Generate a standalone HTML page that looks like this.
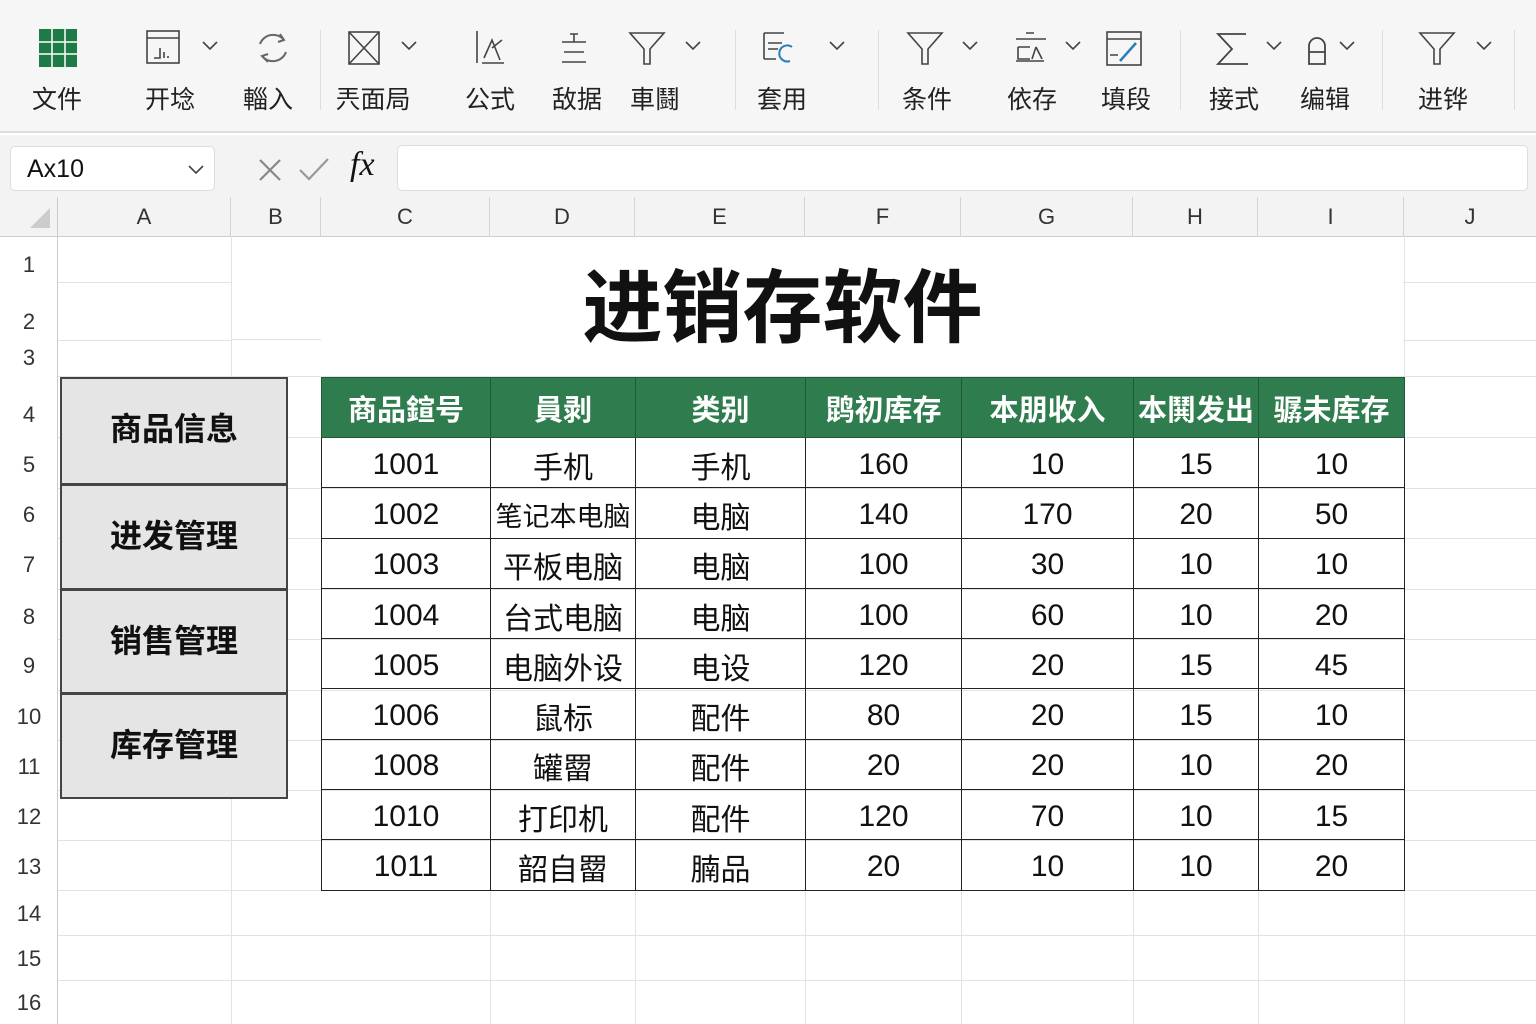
<!DOCTYPE html>
<html><head><meta charset="utf-8"><style>
*{margin:0;padding:0;box-sizing:border-box}
body{width:1536px;height:1024px;position:relative;overflow:hidden;background:#fff;font-family:"Liberation Sans","Noto Sans CJK SC",sans-serif;color:#111}
.a{position:absolute}
.lbl{position:absolute;top:80px;font-size:25px;transform:translateX(-50%);white-space:nowrap;color:#222}
.ic{position:absolute;top:28px}
.chev{position:absolute;top:40px}
.sep{position:absolute;width:1px;background:#ddd;top:30px;height:80px}
.ch{position:absolute;top:197px;height:39px;line-height:39px;text-align:center;font-size:22px;color:#333;border-right:1px solid #d4d4d4}
.rh{position:absolute;left:0;width:58px;text-align:center;font-size:22px;color:#333}
.vl{position:absolute;top:236px;bottom:0;width:1px;background:#e3e3e3}
.hl{position:absolute;left:58px;right:0;height:1px;background:#e3e3e3}
.btn{position:absolute;left:60px;width:228px;background:#e5e5e5;border:2px solid #444;border-bottom-width:1px;font-size:32px;font-weight:bold;text-align:center;color:#111}
table{position:absolute;left:321px;top:377px;border-collapse:collapse;table-layout:fixed}
td{border:1.5px solid #222;text-align:center;font-size:30px;height:50.3px;padding:4px 0 0}
tr.h td{background:#2f7d4e;color:#fff;font-size:29px;font-weight:bold;height:60px;border-color:#1f5a36;padding:0}
</style></head><body>
<div class="a" style="left:0;top:0;width:1536px;height:133px;background:#f6f6f6;border-bottom:2px solid #ddd"></div>
<div class="a" style="left:0;top:135px;width:1536px;height:101px;background:#f3f3f3"></div>

<svg class="ic" style="left:38px" width="40" height="40"><rect x="1" y="1" width="38" height="38" fill="#1e7b45"/><path d="M1 14H39M1 26H39M14 1V39M27 1V39" stroke="#fff" stroke-width="1.5"/></svg>
<svg class="ic" style="left:146px;top:30px" width="36" height="36" fill="none" stroke="#444" stroke-width="1.6"><rect x="1" y="1" width="32" height="32"/><path d="M1 8H33M8 28H14V18M18 28V22M22 28V26"/></svg>
<svg class="ic" style="left:256px;top:30px" width="34" height="36" fill="none" stroke="#666" stroke-width="2"><path d="M28 10A14 14 0 0 0 4 14M6 26A14 14 0 0 0 30 22M24 4L28 10L22 12M12 32L6 26L12 24"/></svg>
<svg class="ic" style="left:348px;top:31px" width="34" height="34" fill="none" stroke="#444" stroke-width="1.6"><rect x="1" y="1" width="30" height="32"/><path d="M1 1L31 33M31 1L1 33"/></svg>
<svg class="ic" style="left:474px;top:30px" width="32" height="36" fill="none" stroke="#444" stroke-width="1.6"><path d="M3 1V33M8 33H30M10 28L18 10L26 30M18 18L28 10"/></svg>
<svg class="ic" style="left:558px;top:32px" width="32" height="34" fill="none" stroke="#444" stroke-width="1.6"><path d="M12 2H20M16 2V10M4 10H28M6 20H26M4 30H28"/></svg>
<svg class="ic" style="left:628px;top:31px" width="38" height="36" fill="none" stroke="#444" stroke-width="1.6"><path d="M2 2H36L22 18V33H16V18Z"/></svg>
<svg class="ic" style="left:762px;top:31px" width="34" height="36" fill="none" stroke="#444" stroke-width="1.6"><path d="M2 2H22M2 2V28M2 28H14M6 12H20M6 18H16"/><path d="M30 16A8 8 0 1 0 28 30" stroke="#2a7fb8" stroke-width="2"/></svg>
<svg class="ic" style="left:906px;top:31px" width="38" height="36" fill="none" stroke="#444" stroke-width="1.6"><path d="M2 2H36L22 18V33H16V18Z"/></svg>
<svg class="ic" style="left:1012px;top:31px" width="40" height="34" fill="none" stroke="#444" stroke-width="1.6"><path d="M14 2H22M4 8H34M6 16H18M6 16V28H18M24 16L20 28M24 16L30 28M4 30H32"/></svg>
<svg class="ic" style="left:1106px;top:31px" width="38" height="36" fill="none" stroke="#444" stroke-width="1.6"><rect x="1" y="1" width="34" height="33"/><path d="M1 8H35M4 24H12"/><path d="M14 30L30 12" stroke="#2a7fb8" stroke-width="2.5"/></svg>
<svg class="ic" style="left:1214px;top:32px" width="36" height="34" fill="none" stroke="#444" stroke-width="1.8"><path d="M32 2H4L18 17L4 32H34"/></svg>
<svg class="ic" style="left:1305px;top:34px" width="24" height="32" fill="none" stroke="#444" stroke-width="1.8"><path d="M4 30V12A8 8 0 0 1 20 12V30Z M4 18H20"/></svg>
<svg class="ic" style="left:1418px;top:31px" width="38" height="36" fill="none" stroke="#444" stroke-width="1.6"><path d="M2 2H36L22 18V33H16V18Z"/></svg>
<svg class="chev" style="left:202px" width="16" height="12"><path d="M1 2L8 9L15 2" fill="none" stroke="#444" stroke-width="1.6"/></svg>
<svg class="chev" style="left:401px" width="16" height="12"><path d="M1 2L8 9L15 2" fill="none" stroke="#444" stroke-width="1.6"/></svg>
<svg class="chev" style="left:685px" width="16" height="12"><path d="M1 2L8 9L15 2" fill="none" stroke="#444" stroke-width="1.6"/></svg>
<svg class="chev" style="left:829px" width="16" height="12"><path d="M1 2L8 9L15 2" fill="none" stroke="#444" stroke-width="1.6"/></svg>
<svg class="chev" style="left:962px" width="16" height="12"><path d="M1 2L8 9L15 2" fill="none" stroke="#444" stroke-width="1.6"/></svg>
<svg class="chev" style="left:1065px" width="16" height="12"><path d="M1 2L8 9L15 2" fill="none" stroke="#444" stroke-width="1.6"/></svg>
<svg class="chev" style="left:1266px" width="16" height="12"><path d="M1 2L8 9L15 2" fill="none" stroke="#444" stroke-width="1.6"/></svg>
<svg class="chev" style="left:1339px" width="16" height="12"><path d="M1 2L8 9L15 2" fill="none" stroke="#444" stroke-width="1.6"/></svg>
<svg class="chev" style="left:1476px" width="16" height="12"><path d="M1 2L8 9L15 2" fill="none" stroke="#444" stroke-width="1.6"/></svg>
<div class="sep" style="left:320px"></div><div class="sep" style="left:735px"></div><div class="sep" style="left:878px"></div><div class="sep" style="left:1180px"></div><div class="sep" style="left:1382px"></div><div class="sep" style="left:1514px"></div>
<div class="lbl" style="left:57px">文件</div>
<div class="lbl" style="left:170px">开埝</div>
<div class="lbl" style="left:268px">輜入</div>
<div class="lbl" style="left:373px">兲面局</div>
<div class="lbl" style="left:490px">公式</div>
<div class="lbl" style="left:577px">敌据</div>
<div class="lbl" style="left:655px">車鬪</div>
<div class="lbl" style="left:782px">套用</div>
<div class="lbl" style="left:927px">条件</div>
<div class="lbl" style="left:1032px">依存</div>
<div class="lbl" style="left:1126px">填段</div>
<div class="lbl" style="left:1234px">接式</div>
<div class="lbl" style="left:1325px">编辑</div>
<div class="lbl" style="left:1443px">进铧</div>

<div class="a" style="left:10px;top:146px;width:205px;height:45px;background:#fff;border:1px solid #ddd;border-radius:5px;font-size:25px;line-height:44px;padding-left:16px">Ax10</div>
<svg class="a" style="left:188px;top:164px" width="16" height="12"><path d="M1 2L8 9L15 2" fill="none" stroke="#444" stroke-width="1.6"/></svg>
<svg class="a" style="left:258px;top:158px" width="24" height="24"><path d="M2 2L22 22M22 2L2 22" stroke="#888" stroke-width="2.2"/></svg>
<svg class="a" style="left:298px;top:156px" width="32" height="26"><path d="M2 14L11 23L30 3" fill="none" stroke="#999" stroke-width="2.2"/></svg>
<div class="a" style="left:350px;top:146px;font-family:'Liberation Serif',serif;font-style:italic;font-size:34px">fx</div>
<div class="a" style="left:397px;top:145px;width:1131px;height:46px;background:#fff;border:1px solid #ddd;border-radius:5px"></div>

<svg class="a" style="left:28px;top:206px" width="24" height="24"><path d="M22 2V22H2Z" fill="#ccc"/></svg>
<div class="a" style="left:0;top:236px;width:1536px;height:1px;background:#ccc"></div>
<div class="a" style="left:57px;top:197px;width:1px;height:827px;background:#ccc"></div>
<div class="ch" style="left:58px;width:173px">A</div>
<div class="ch" style="left:231px;width:90px">B</div>
<div class="ch" style="left:321px;width:169px">C</div>
<div class="ch" style="left:490px;width:145px">D</div>
<div class="ch" style="left:635px;width:170px">E</div>
<div class="ch" style="left:805px;width:156px">F</div>
<div class="ch" style="left:961px;width:172px">G</div>
<div class="ch" style="left:1133px;width:125px">H</div>
<div class="ch" style="left:1258px;width:146px">I</div>
<div class="ch" style="left:1404px;width:132px;border:none">J</div>

<div class="vl" style="left:231px"></div><div class="vl" style="left:490px"></div><div class="vl" style="left:635px"></div><div class="vl" style="left:805px"></div><div class="vl" style="left:961px"></div><div class="vl" style="left:1133px"></div><div class="vl" style="left:1258px"></div><div class="vl" style="left:1404px"></div>
<div class="hl" style="top:282px"></div><div class="hl" style="top:340px"></div><div class="hl" style="top:376px"></div><div class="hl" style="top:437px"></div><div class="hl" style="top:488px"></div><div class="hl" style="top:538px"></div><div class="hl" style="top:589px"></div><div class="hl" style="top:639px"></div><div class="hl" style="top:690px"></div><div class="hl" style="top:740px"></div><div class="hl" style="top:790px"></div><div class="hl" style="top:840px"></div><div class="hl" style="top:890px"></div><div class="hl" style="top:935px"></div><div class="hl" style="top:980px"></div>
<div class="a" style="left:232px;top:237px;width:1171px;height:139px;background:#fff"></div>
<div class="a" style="left:232px;top:237px;width:89px;height:103px;border-bottom:1px solid #e3e3e3"></div>

<div class="rh" style="top:252px">1</div><div class="rh" style="top:309px">2</div><div class="rh" style="top:345px">3</div><div class="rh" style="top:402px">4</div><div class="rh" style="top:452px">5</div><div class="rh" style="top:502px">6</div><div class="rh" style="top:552px">7</div><div class="rh" style="top:604px">8</div><div class="rh" style="top:653px">9</div><div class="rh" style="top:704px">10</div><div class="rh" style="top:754px">11</div><div class="rh" style="top:804px">12</div><div class="rh" style="top:854px">13</div><div class="rh" style="top:901px">14</div><div class="rh" style="top:946px">15</div><div class="rh" style="top:990px">16</div>

<div class="a" style="left:0;top:254px;width:1565px;text-align:center;font-size:80px;font-weight:bold;font-family:'Noto Sans CJK SC',sans-serif;line-height:96px">进销存软件</div>

<div class="btn" style="top:377px;height:107px;line-height:100px">商品信息</div>
<div class="btn" style="top:484px;height:105px;line-height:100px">进发管理</div>
<div class="btn" style="top:589px;height:104px;line-height:100px">销售管理</div>
<div class="btn" style="top:693px;height:106px;line-height:100px;border-bottom-width:2px">库存管理</div>

<table>
<colgroup><col style="width:169px"><col style="width:145px"><col style="width:170px"><col style="width:156px"><col style="width:172px"><col style="width:125px"><col style="width:146px"></colgroup>
<tr class="h"><td>商品鍹号</td><td>員剥</td><td>类别</td><td>鹍初库存</td><td>本朋收入</td><td>本鬨发出</td><td>骣未库存</td></tr>
<tr><td>1001</td><td>手机</td><td>手机</td><td>160</td><td>10</td><td>15</td><td>10</td></tr>
<tr><td>1002</td><td style="font-size:27px">笔记本电脑</td><td>电脑</td><td>140</td><td>170</td><td>20</td><td>50</td></tr>
<tr><td>1003</td><td>平板电脑</td><td>电脑</td><td>100</td><td>30</td><td>10</td><td>10</td></tr>
<tr><td>1004</td><td>台式电脑</td><td>电脑</td><td>100</td><td>60</td><td>10</td><td>20</td></tr>
<tr><td>1005</td><td>电脑外设</td><td>电设</td><td>120</td><td>20</td><td>15</td><td>45</td></tr>
<tr><td>1006</td><td>鼠标</td><td>配件</td><td>80</td><td>20</td><td>15</td><td>10</td></tr>
<tr><td>1008</td><td>罐罶</td><td>配件</td><td>20</td><td>20</td><td>10</td><td>20</td></tr>
<tr><td>1010</td><td>打印机</td><td>配件</td><td>120</td><td>70</td><td>10</td><td>15</td></tr>
<tr><td>1011</td><td>韶自罶</td><td>腩品</td><td>20</td><td>10</td><td>10</td><td>20</td></tr>
</table>
</body></html>
